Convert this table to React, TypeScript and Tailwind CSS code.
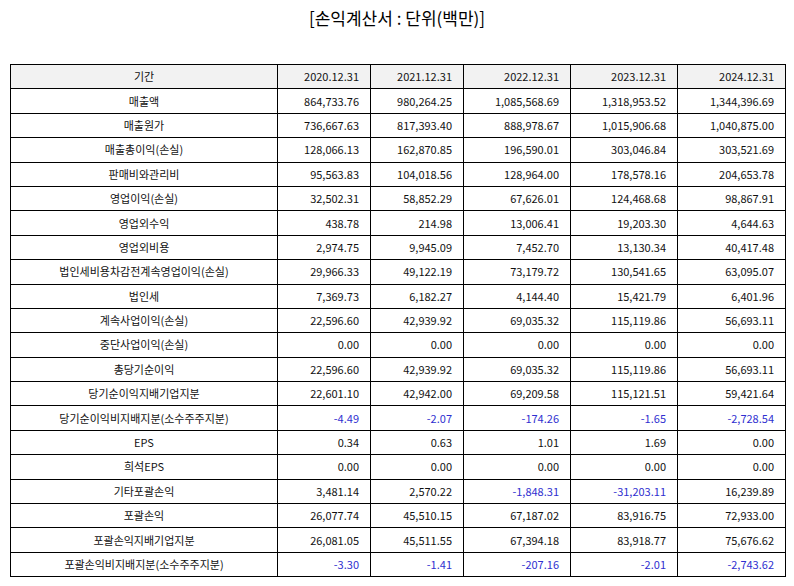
const rows: { label: string; values: string[] }[] = [
  { label: '매출액', values: ['864,733.76', '980,264.25', '1,085,568.69', '1,318,953.52', '1,344,396.69'] },
  { label: '매출원가', values: ['736,667.63', '817,393.40', '888,978.67', '1,015,906.68', '1,040,875.00'] },
  { label: '매출총이익(손실)', values: ['128,066.13', '162,870.85', '196,590.01', '303,046.84', '303,521.69'] },
  { label: '판매비와관리비', values: ['95,563.83', '104,018.56', '128,964.00', '178,578.16', '204,653.78'] },
  { label: '영업이익(손실)', values: ['32,502.31', '58,852.29', '67,626.01', '124,468.68', '98,867.91'] },
  { label: '영업외수익', values: ['438.78', '214.98', '13,006.41', '19,203.30', '4,644.63'] },
  { label: '영업외비용', values: ['2,974.75', '9,945.09', '7,452.70', '13,130.34', '40,417.48'] },
  { label: '법인세비용차감전계속영업이익(손실)', values: ['29,966.33', '49,122.19', '73,179.72', '130,541.65', '63,095.07'] },
  { label: '법인세', values: ['7,369.73', '6,182.27', '4,144.40', '15,421.79', '6,401.96'] },
  { label: '계속사업이익(손실)', values: ['22,596.60', '42,939.92', '69,035.32', '115,119.86', '56,693.11'] },
  { label: '중단사업이익(손실)', values: ['0.00', '0.00', '0.00', '0.00', '0.00'] },
  { label: '총당기순이익', values: ['22,596.60', '42,939.92', '69,035.32', '115,119.86', '56,693.11'] },
  { label: '당기순이익지배기업지분', values: ['22,601.10', '42,942.00', '69,209.58', '115,121.51', '59,421.64'] },
  { label: '당기순이익비지배지분(소수주주지분)', values: ['-4.49', '-2.07', '-174.26', '-1.65', '-2,728.54'] },
  { label: 'EPS', values: ['0.34', '0.63', '1.01', '1.69', '0.00'] },
  { label: '희석EPS', values: ['0.00', '0.00', '0.00', '0.00', '0.00'] },
  { label: '기타포괄손익', values: ['3,481.14', '2,570.22', '-1,848.31', '-31,203.11', '16,239.89'] },
  { label: '포괄손익', values: ['26,077.74', '45,510.15', '67,187.02', '83,916.75', '72,933.00'] },
  { label: '포괄손익지배기업지분', values: ['26,081.05', '45,511.55', '67,394.18', '83,918.77', '75,676.62'] },
  { label: '포괄손익비지배지분(소수주주지분)', values: ['-3.30', '-1.41', '-207.16', '-2.01', '-2,743.62'] },
]

const periods = ['2020.12.31', '2021.12.31', '2022.12.31', '2023.12.31', '2024.12.31']

const App = () => {
  return (
    <div
      className="w-[794px] h-[586px] bg-white text-[#111] px-[10px]"
      style={{ fontFamily: '"Noto Sans CJK KR", "Noto Sans", sans-serif' }}
    >
      <h1 className="pt-[7px] h-[64px] text-center text-[17px] leading-[22px] text-black">[손익계산서 : 단위(백만)]</h1>
      <table className="w-[775px] table-fixed border-collapse text-[11px] leading-none">
        <colgroup>
          <col className="w-[267px]" />
          <col className="w-[93px]" />
          <col className="w-[93px]" />
          <col className="w-[107px]" />
          <col className="w-[107px]" />
          <col className="w-[108px]" />
        </colgroup>
        <thead>
          <tr className="h-[24.4px] bg-[#f2f2f2]">
            <th className="border border-black font-normal text-center">기간</th>
            {periods.map((p) => (
              <th key={p} className="border border-black font-normal text-right pr-[11px]">{p}</th>
            ))}
          </tr>
        </thead>
        <tbody>
          {rows.map((row) => (
            <tr key={row.label} className="h-[24.4px]">
              <td className="border border-black text-center">{row.label}</td>
              {row.values.map((v, i) => (
                <td
                  key={i}
                  className={`border border-black text-right pr-[11px] ${v.startsWith('-') ? 'text-[#2f2fd0]' : ''}`}
                >
                  {v}
                </td>
              ))}
            </tr>
          ))}
        </tbody>
      </table>
    </div>
  )
}

export default App
